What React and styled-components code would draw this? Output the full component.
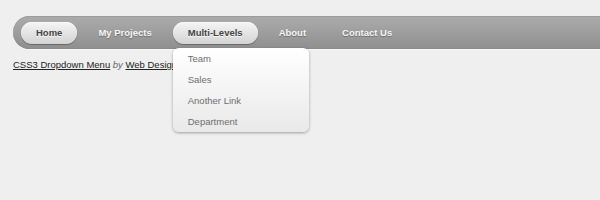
import React from "react";
import styled, { createGlobalStyle } from "styled-components";

const Global = createGlobalStyle`
  html, body { margin: 0; padding: 0; overflow: hidden; }
  body {
    background: #efefef;
    font-family: "Liberation Sans", Arial, Helvetica, sans-serif;
    width: 600px;
    height: 200px;
  }
`;

const Page = styled.div`
  padding: 16px 0 0 13px;
`;

const Nav = styled.ul`
  list-style: none;
  margin: 0;
  padding: 0 0 0 8px;
  width: 587px;
  height: 33px;
  box-sizing: border-box;
  display: flex;
  align-items: center;
  gap: 6px;
  border-radius: 17px 0 0 17px;
  background: linear-gradient(#acacac, #8f8f8f);
  box-shadow: inset 0 1px 0 #9c9c9c, inset 0 -1px 0 #8a8a8a, 0 1px 1px rgba(255,255,255,0.6);
  position: relative;
  z-index: 1;
`;

const Item = styled.li`
  position: relative;
  height: 22px;
`;

const Link = styled.a`
  display: flex;
  align-items: center;
  height: 22px;
  padding: 0 15px;
  box-sizing: border-box;
  border-radius: 11px;
  font-size: 9.5px;
  font-weight: bold;
  text-decoration: none;
  cursor: pointer;
  color: ${(p) => (p.$active ? "#444" : "#f6f6f6")};
  text-shadow: ${(p) =>
    p.$active ? "0 1px 0 rgba(255,255,255,0.8)" : "0 1px 1px rgba(0,0,0,0.3)"};
  background: ${(p) => (p.$active ? "linear-gradient(#f5f5f5, #d3d3d3)" : "transparent")};
  box-shadow: ${(p) =>
    p.$active ? "0 1px 1px rgba(0,0,0,0.3), inset 0 1px 0 #fafafa" : "none"};
`;

const Dropdown = styled.ul`
  position: absolute;
  top: 26px;
  left: 0;
  width: 136px;
  margin: 0;
  padding: 0;
  list-style: none;
  border-radius: 6px;
  background: linear-gradient(#ffffff, #e9e9e9);
  box-shadow: 0 1px 3px rgba(0,0,0,0.35);
  z-index: 2;
`;

const SubLink = styled.li`
  height: 21px;
  display: flex;
  align-items: center;
  padding: 1px 0 0 15px;
  box-sizing: border-box;
  font-size: 9.5px;
  color: #6e6e6e;
`;

const Credit = styled.p`
  margin: 10px 0 0;
  font-size: 9.5px;
  line-height: 12px;
  color: #222;
  position: relative;
  z-index: 0;
`;

const CreditLink = styled.a`
  color: #222;
  text-decoration: underline;
`;

const By = styled.em`
  color: #666;
`;

const items = ["Home", "My Projects", "Multi-Levels", "About", "Contact Us"];
const sub = ["Team", "Sales", "Another Link", "Department"];

export default function App() {
  return (
    <>
      <Global />
      <Page>
        <Nav>
          {items.map((label) => (
            <Item key={label}>
              <Link $active={label === "Home" || label === "Multi-Levels"}>{label}</Link>
              {label === "Multi-Levels" && (
                <Dropdown>
                  {sub.map((s) => (
                    <SubLink key={s}>{s}</SubLink>
                  ))}
                </Dropdown>
              )}
            </Item>
          ))}
        </Nav>
        <Credit>
          <CreditLink>CSS3 Dropdown Menu</CreditLink> <By>by</By>{" "}
          <CreditLink>Web Designer Wall</CreditLink>
        </Credit>
      </Page>
    </>
  );
}
